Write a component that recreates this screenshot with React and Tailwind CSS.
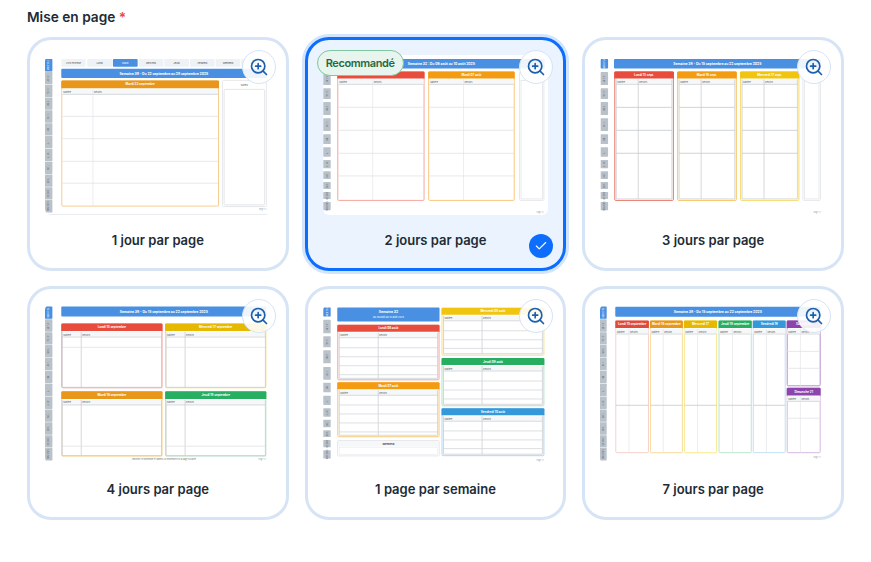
import React from 'react';
import { Check, ZoomIn } from 'lucide-react';

const RED = '#e74c3c';
const ORANGE = '#f39c12';
const YELLOW = '#f1c40f';
const GREEN = '#27ae60';
const BLUE = '#3498db';
const PURPLE = '#8e44ad';

const MONTHS = ['Vacances', 'Janvier', 'Février', 'Mars', 'Avril', 'Mai', 'Juin', 'Juillet', 'Août', 'Sept.', 'Octobre', 'Novembre'];

// sidebar month tabs, as [top, bottom] in preview pixels
const evenTabs = (top, bottom) => {
  const step = (bottom - top) / 12;
  return Array.from({ length: 12 }, (_, i) => [top + i * step, top + (i + 1) * step - 0.5]);
};
const unevenTabs = [
  [4, 13.3], [17, 30], [33.3, 44], [47, 60], [63.3, 76], [79.3, 89], [92.3, 101.7],
  [105, 113.3], [116.3, 124], [127, 134], [137, 144], [147, 155.3],
];

const Tabs = ({ tabs, x = 0, w = 7.4 }) => (
  <g>
    {tabs.map(([top, bottom], i) => {
      const cx = x + w / 2;
      const cy = (top + bottom) / 2;
      return (
        <g key={i}>
          <rect x={x} y={top} width={w} height={bottom - top} rx="0.6" fill={i === 0 ? '#4a90e2' : '#b9c1c9'} />
          <text x={cx} y={cy + 0.7} transform={`rotate(-90 ${cx} ${cy})`} textAnchor="middle" fontSize="2.1" fill={i === 0 ? '#fff' : '#56606a'}>
            {MONTHS[i]}
          </text>
        </g>
      );
    })}
  </g>
);

const Banner = ({ x, y, w, h, text, sub }) => (
  <g>
    <rect x={x} y={y} width={w} height={h} rx="1" fill="#4a90e2" />
    <text x={x + w / 2} y={sub ? y + h / 2 - 1 : y + h / 2 + 1.2} textAnchor="middle" fontSize="3.4" fontWeight="700" fill="#fff">{text}</text>
    {sub && <text x={x + w / 2} y={y + h / 2 + 3.4} textAnchor="middle" fontSize="2.4" fill="#fff">{sub}</text>}
  </g>
);

// one day block: coloured header, a two-column table and its row lines
const Day = ({ x, y, w, h, head = 7, color, edge, title, split, lines = [], inset = 1, lineColor = '#dfe2e5', strong = false }) => {
  const tableTop = y + head + 1;
  const tableLeft = x + inset;
  const tableRight = x + w - inset;
  const tableBottom = y + h - inset;
  return (
    <g>
      <rect x={x + 0.5} y={y + 0.5} width={w - 1} height={h - 1} rx="1" fill="#fff" stroke={edge} strokeWidth="1" />
      <path d={`M${x} ${y + head}V${y + 1}q0-1 1-1H${x + w - 1}q1 0 1 1V${y + head}Z`} fill={color} />
      <text x={x + w / 2} y={y + head / 2 + 1.1} textAnchor="middle" fontSize="3" fontWeight="700" fill="#fff">{title}</text>
      <rect x={tableLeft} y={tableTop} width={w - inset * 2} height="5" fill="#f6f7f9" />
      <line x1={tableLeft} x2={tableRight} y1={tableTop + 5} y2={tableTop + 5} stroke="#cfd3d7" strokeWidth="0.8" />
      <text x={tableLeft + 1} y={tableTop + 3.5} fontSize="2.2" fill="#555">Matière</text>
      <text x={split + 1} y={tableTop + 3.5} fontSize="2.2" fill="#555">Devoirs</text>
      <line x1={split} x2={split} y1={tableTop} y2={tableBottom} stroke={strong ? '#c4c8cc' : '#e2e5e8'} strokeWidth="0.7" />
      {lines.map((ly) => (
        <line key={ly} x1={tableLeft} x2={tableRight} y1={ly} y2={ly} stroke={lineColor} strokeWidth="0.8" />
      ))}
      {strong && (
        <path d={`M${tableLeft} ${tableTop}V${tableBottom}H${tableRight}V${tableTop}`} fill="none" stroke="#c4c8cc" strokeWidth="0.7" />
      )}
    </g>
  );
};

const NotesColumn = ({ x, y, w, h }) => (
  <g>
    <rect x={x + 0.5} y={y + 0.5} width={w - 1} height={h - 1} rx="1" fill="#fff" stroke="#e6e8eb" />
    <rect x={x + 2} y={y + 9} width={w - 4} height={h - 11} fill="#fff" stroke="#e3e5e8" strokeWidth="0.8" />
  </g>
);

const Footer = ({ x, y, text = 'Page 1/1' }) => (
  <text x={x} y={y} fontSize="1.9" fill="#9aa0a6" textAnchor="end">{text}</text>
);

const OneDay = () => {
  const names = ['Lundi', 'Mardi', 'Mercredi', 'Jeudi', 'Vendredi', 'Weekend', 'Notes'];
  return (
    <g>
      <Tabs tabs={evenTabs(4, 158)} />
      <rect x="16.3" y="4" width="24.4" height="7.6" rx="1" fill="#f0f3f6" />
      <text x="28.5" y="8.8" textAnchor="middle" fontSize="2" fill="#555">Vue d'ensemble</text>
      {names.map((name, i) => (
        <g key={name}>
          <rect x={42.3 + i * 25.7} y="4" width="24.8" height="7.6" rx="1" fill={i === 1 ? '#4a90e2' : '#eef2f6'} />
          <text x={54.7 + i * 25.7} y="8.8" textAnchor="middle" fontSize="2.4" fill={i === 1 ? '#fff' : '#444'}>{name}</text>
        </g>
      ))}
      <Banner x={16.3} y={13.7} w={205.4} h={9.3} text="Semaine 39 - Du 22 septembre au 28 septembre 2025" />
      <Day x={16.3} y={25.3} w={158} h={126.4} head={8} color="#e8971a" edge="#f6cd8e" title="Mardi 23 septembre" split={48} lines={[61.3, 83.7, 106.3, 128.3]} />
      <rect x="177.7" y="25.3" width="44" height="126.4" rx="1" fill="#fff" stroke="#e6e8eb" />
      <text x="199.7" y="30.5" textAnchor="middle" fontSize="2.6" fill="#555">Notes</text>
      <rect x="179.4" y="34.3" width="40.6" height="115.7" rx="1" fill="#fff" stroke="#e3e5e8" />
      <Footer x={221.5} y={155} />
      <line x1="3" x2="226" y1="159.5" y2="159.5" stroke="#e8eaed" strokeWidth="1" />
    </g>
  );
};

const TwoDays = () => (
  <g>
    <Tabs tabs={unevenTabs} x={0.3} />
    <Banner x={15} y={4} w={207} h={9.3} text="Semaine 32 : Du 06 août au 10 août 2025" />
    <Day x={14.3} y={16.3} w={87.4} h={129.7} color={RED} edge="#f4a79f" title="Lundi 06 août" split={49.7} lines={[52.3, 75.3, 98.3, 121]} />
    <Day x={105.3} y={16.3} w={86.7} h={129.7} color={ORANGE} edge="#f9c97c" title="Mardi 07 août" split={140.7} lines={[52.3, 75.3, 98.3, 121]} />
    <NotesColumn x={196.3} y={16.3} w={25.4} h={129.7} />
    <Footer x={221} y={158} />
  </g>
);

const ThreeDays = () => {
  const lines = [52.3, 75.3, 98.3];
  return (
    <g>
      <Tabs tabs={unevenTabs} x={0.7} />
      <Banner x={14} y={4} w={207} h={9.3} text="Semaine 38 - Du 15 septembre au 22 septembre 2025" />
      <Day x={14.3} y={16.3} w={59.7} h={129.7} color={RED} edge="#e9766a" title="Lundi 15 sept." split={38.3} lines={lines} inset={2} strong lineColor="#c4c8cc" />
      <Day x={77.3} y={16.3} w={59.7} h={129.7} color={ORANGE} edge="#f7c35f" title="Mardi 16 sept." split={101.3} lines={lines} inset={2} strong lineColor="#c4c8cc" />
      <Day x={140.3} y={16.3} w={59.4} h={129.7} color={YELLOW} edge="#f8da6a" title="Mercredi 17 sept." split={164.3} lines={lines} inset={2} strong lineColor="#c4c8cc" />
      <NotesColumn x={202.7} y={16.3} w={18.6} h={129.7} />
      <Footer x={221} y={158} />
    </g>
  );
};

const FourDays = () => (
  <g>
    <Tabs tabs={evenTabs(2.3, 157)} />
    <Banner x={16.3} y={2.3} w={205.4} h={10} text="Semaine 38 - Du 15 septembre au 22 septembre 2025" />
    <Day x={16.3} y={19.3} w={101.4} h={65} head={7.7} color={RED} edge="#f0a39b" title="Lundi 15 septembre" split={36.3} lines={[43.3]} strong />
    <Day x={120.3} y={19.3} w={101.4} h={65} head={7.7} color="#e6b800" edge="#f7e08e" title="Mercredi 17 septembre" split={140.3} lines={[43.3]} strong />
    <Day x={16.3} y={87.3} w={101.4} h={65.4} head={7.7} color="#e8971a" edge="#f6d48c" title="Mardi 16 septembre" split={36.3} lines={[142.3]} strong />
    <Day x={120.3} y={87.3} w={101.4} h={65.4} head={7.7} color={GREEN} edge="#bfe3cf" title="Jeudi 18 septembre" split={140.3} lines={[142.3]} strong />
    <text x="119" y="156" textAnchor="middle" fontSize="2" fill="#777">Vendredi 19 septembre et samedi 20 septembre sur la page suivante</text>
    <Footer x={221} y={156} />
  </g>
);

const WeekPage = () => (
  <g>
    <Tabs tabs={[[3.3, 12.3], [15.7, 29.3], [32.3, 43.3], [46.3, 59.3], [63, 75.7], [78.7, 88.3], [91.7, 101], [104.3, 112.7], [115.7, 123.3], [126.3, 133], [136, 143.3], [146.3, 154.7]]} x={0.3} />
    <Banner x={14.3} y={3.3} w={102.4} h={14} text="Semaine 32" sub="Du 06 août au 10 août 2025" />
    <Day x={14.3} y={20.7} w={102.4} h={55.6} color={RED} edge="#f4a79f" title="Lundi 06 août" split={55.3} lines={[43.7, 52.7, 61.7, 70.7]} inset={2} lineColor="#d4d7da" strong />
    <Day x={14.3} y={78.3} w={102.4} h={55} color={ORANGE} edge="#f9c97c" title="Mardi 07 août" split={55.3} lines={[101, 110, 119, 128]} inset={2} lineColor="#d4d7da" strong />
    <rect x="14.6" y="136.6" width="101.8" height="15.4" rx="1" fill="#fff" stroke="#e6e8eb" />
    <rect x="15" y="137" width="101" height="5.5" fill="#f6f7f9" />
    <text x="65.5" y="141" textAnchor="middle" fontSize="2.6" fontWeight="700" fill="#444">Weekend</text>
    <rect x="16.3" y="143.3" width="98.4" height="7.4" fill="#fff" stroke="#e8eaed" strokeWidth="0.6" />
    <Day x={118.7} y={3.7} w={103} h={48} color={YELLOW} edge="#f9df8c" title="Mercredi 08 août" split={159.3} lines={[26.7, 35.7, 44.3]} inset={2} lineColor="#d4d7da" strong />
    <Day x={118.7} y={54} w={103} h={48.3} color={GREEN} edge="#b4dfc6" title="Jeudi 09 août" split={159.3} lines={[77, 86, 95]} inset={2} lineColor="#d4d7da" strong />
    <Day x={118.7} y={104.3} w={103} h={48} color={BLUE} edge="#b3d4ee" title="Vendredi 10 août" split={159.3} lines={[127, 136, 144.7]} inset={2} lineColor="#d4d7da" strong />
    <Footer x={221} y={157} />
  </g>
);

const SevenDays = () => {
  const columns = [
    { x: 15.3, w: 33.7, color: '#e04a3a', edge: '#f7d0ca', title: 'Lundi 15 septembre', split: 29 },
    { x: 50, w: 33, color: '#e8971a', edge: '#f9dc9c', title: 'Mardi 16 septembre', split: 63.3 },
    { x: 84, w: 33.3, color: '#e6b800', edge: '#f9e98f', title: 'Mercredi 17', split: 97.7 },
    { x: 118.7, w: 33.3, color: GREEN, edge: '#bce6cd', title: 'Jeudi 18 septembre', split: 132.7 },
    { x: 153, w: 33, color: BLUE, edge: '#bfe0f3', title: 'Vendredi 19', split: 166.7 },
  ];
  return (
    <g>
      <Tabs tabs={evenTabs(2.3, 157)} x={-0.7} />
      <Banner x={15.3} y={2.7} w={205.3} h={10} text="Semaine 38 - Du 15 septembre au 22 septembre 2025" />
      {columns.map((c) => (
        <Day key={c.x} x={c.x} y={16.3} w={c.w} h={133} head={7.7} color={c.color} edge={c.edge} title={c.title} split={c.split} lines={[101.3]} inset={0.5} lineColor="#c4c8cc" />
      ))}
      <Day x={187} y={16.3} w={34} h={66} head={7.7} color={PURPLE} edge="#b98cd0" title="Samedi 20" split={200.7} lines={[47.3, 64.3]} inset={0.5} />
      <Day x={187} y={83.7} w={34} h={65.6} head={7.7} color={PURPLE} edge="#d5b8e2" title="Dimanche 21" split={200.7} lines={[114.3]} inset={0.5} />
      <Footer x={221} y={154} />
    </g>
  );
};

const layouts = [
  { label: '1 jour par page', Preview: OneDay },
  { label: '2 jours par page', Preview: TwoDays, selected: true },
  { label: '3 jours par page', Preview: ThreeDays },
  { label: '4 jours par page', Preview: FourDays },
  { label: '1 page par semaine', Preview: WeekPage },
  { label: '7 jours par page', Preview: SevenDays },
];

const LayoutCard = ({ label, Preview, selected }) => (
  <div className={`relative h-[234px] rounded-[24px] border-[3px] p-[15px] ${selected ? 'border-[#0d6efd] bg-[#eaf3fe] shadow-[0_0_0_3px_#d3e5fc]' : 'border-[#d6e4f5] bg-white'}`}>
    <svg viewBox="0 0 226 160" className="block h-[160px] w-full rounded-md bg-white">
      <Preview />
    </svg>
    <p className="mt-[15px] text-center text-[13px] leading-5 font-semibold text-[#212b36]">{label}</p>
    {selected && (
      <span className="absolute top-[10px] left-[9px] flex h-[26px] w-[87px] items-center justify-center rounded-full border-[1.5px] border-[#7fc79f] bg-[#e8f5ee] text-[11px] font-semibold tracking-[-0.4px] text-[#1f6b45]">
        Recommandé
      </span>
    )}
    <button className="absolute top-[10px] right-[10px] flex h-[34px] w-[34px] items-center justify-center rounded-full border border-[#d6e4f5] bg-white/90">
      <ZoomIn size={20} strokeWidth={2} className="text-[#1b5fad]" />
    </button>
    {selected && (
      <span className="absolute right-[10px] bottom-[10px] flex h-6 w-6 items-center justify-center rounded-full bg-[#0d6efd]">
        <Check size={14} strokeWidth={2} className="text-white" />
      </span>
    )}
  </div>
);

export default function App() {
  return (
    <div className="h-[562px] w-[871px] overflow-hidden bg-white pt-[7px] pl-[27px] font-[Inter,sans-serif]">
      <h2 className="mb-[10px] text-[13.7px] leading-5 font-semibold text-[#212b36]">
        Mise en page <span className="text-[#e74c3c]">*</span>
      </h2>
      <div className="grid w-[817px] grid-cols-3 gap-x-4 gap-y-[15px]">
        {layouts.map((layout) => (
          <LayoutCard key={layout.label} {...layout} />
        ))}
      </div>
    </div>
  );
}
